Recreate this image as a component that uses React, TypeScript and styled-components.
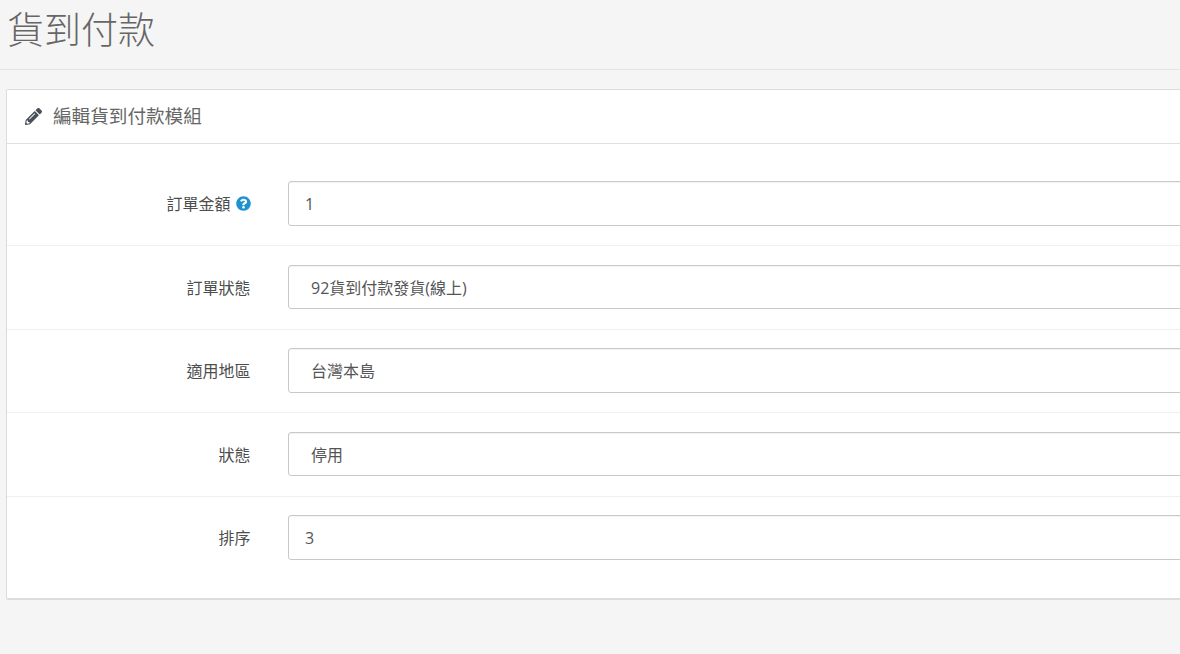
import styled, { createGlobalStyle } from 'styled-components';
import { FaPencilAlt, FaQuestionCircle } from 'react-icons/fa';

const GlobalStyle = createGlobalStyle`
  html, body {
    margin: 0;
    height: 100%;
    overflow: hidden;
    background: #f5f5f5;
  }
  * {
    box-sizing: border-box;
  }
`;

const Page = styled.div`
  width: 1500px;
  height: 654px;
  background: #f5f5f5;
  font-family: "Open Sans", "Noto Sans CJK TC", sans-serif;
  font-size: 16px;
  color: #555;
`;

const Header = styled.div`
  height: 70px;
  padding-left: 7px;
  border-bottom: 1px solid #e4e4e4;
`;

const Title = styled.h1`
  margin: 0;
  font-size: 37px;
  font-weight: 300;
  line-height: 60px;
  color: #666;
`;

const Panel = styled.div`
  margin: 19px 0 0 6px;
  background: #fff;
  border: 1px solid #dcdcdc;
  border-bottom-width: 2px;
  border-radius: 2px;
`;

const PanelHeading = styled.div`
  height: 54px;
  padding: 0 0 4px 18px;
  display: flex;
  align-items: center;
  gap: 11px;
  border-bottom: 1px solid #e0e0e0;
  font-size: 18.6px;
  color: #666;
`;

const PencilIcon = styled(FaPencilAlt)`
  width: 17px;
  height: 17px;
  margin-top: 4px;
  color: #4a5058;
`;

const PanelBody = styled.div`
  padding: 18.5px 0 17.5px;
`;

const Row = styled.div<{ $last?: boolean }>`
  display: flex;
  align-items: center;
  padding: 18.5px 0 19.5px;
  border-bottom: 1px solid ${p => (p.$last ? 'transparent' : '#f0f0f0')};
`;

const Label = styled.label`
  width: 243.5px;
  flex: none;
  display: flex;
  justify-content: flex-end;
  align-items: center;
  gap: 5px;
  font-weight: 400;
  color: #4d4d4d;
`;

const HelpIcon = styled(FaQuestionCircle)`
  width: 15px;
  height: 15px;
  color: #1e91cf;
`;

const Field = styled.div<{ $select?: boolean }>`
  margin-left: 37.5px;
  flex: 1;
  height: 44.5px;
  padding: ${p => (p.$select ? '0 0 0 22px' : '1px 0 0 16px')};
  display: flex;
  align-items: center;
  background: #fff;
  border: 1px solid #c9c9c9;
  border-radius: 3px;
  box-shadow: inset 0 1px 1px rgba(0, 0, 0, 0.05);
  color: #555;
`;

const rows = [
  { label: '訂單金額', value: '1', help: true },
  { label: '訂單狀態', value: '92貨到付款發貨(線上)', select: true },
  { label: '適用地區', value: '台灣本島', select: true },
  { label: '狀態', value: '停用', select: true },
  { label: '排序', value: '3' },
];

function App() {
  return (
    <Page>
      <GlobalStyle />
      <Header>
        <Title>貨到付款</Title>
      </Header>
      <Panel>
        <PanelHeading>
          <PencilIcon />
          編輯貨到付款模組
        </PanelHeading>
        <PanelBody>
          {rows.map((row, i) => (
            <Row key={row.label} $last={i === rows.length - 1}>
              <Label>
                {row.label}
                {row.help && <HelpIcon />}
              </Label>
              <Field $select={row.select}>{row.value}</Field>
            </Row>
          ))}
        </PanelBody>
      </Panel>
    </Page>
  );
}

export default App;
